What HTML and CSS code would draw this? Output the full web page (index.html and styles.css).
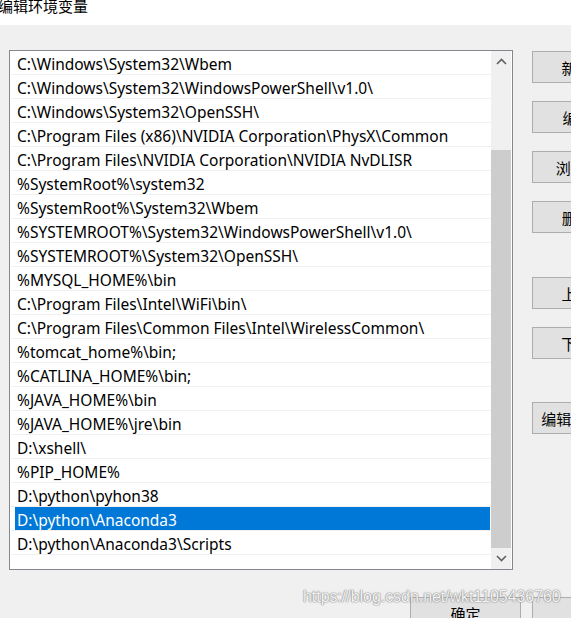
FILE: index.html
```html
<!DOCTYPE html>
<html>
<head>
<meta charset="utf-8">
<link rel="stylesheet" href="styles.css">
</head>
<body>
<div class="titlebar"><span class="title">编辑环境变量</span></div>
<div class="main">
  <div class="listbox">
    <div class="rows">
      <div class="row"><span>C:\Windows\System32\Wbem</span></div>
      <div class="row"><span>C:\Windows\System32\WindowsPowerShell\v1.0\</span></div>
      <div class="row"><span>C:\Windows\System32\OpenSSH\</span></div>
      <div class="row"><span>C:\Program Files (x86)\NVIDIA Corporation\PhysX\Common</span></div>
      <div class="row"><span>C:\Program Files\NVIDIA Corporation\NVIDIA NvDLISR</span></div>
      <div class="row"><span>%SystemRoot%\system32</span></div>
      <div class="row"><span>%SystemRoot%\System32\Wbem</span></div>
      <div class="row"><span>%SYSTEMROOT%\System32\WindowsPowerShell\v1.0\</span></div>
      <div class="row"><span>%SYSTEMROOT%\System32\OpenSSH\</span></div>
      <div class="row"><span>%MYSQL_HOME%\bin</span></div>
      <div class="row"><span>C:\Program Files\Intel\WiFi\bin\</span></div>
      <div class="row"><span>C:\Program Files\Common Files\Intel\WirelessCommon\</span></div>
      <div class="row"><span>%tomcat_home%\bin;</span></div>
      <div class="row"><span>%CATLINA_HOME%\bin;</span></div>
      <div class="row"><span>%JAVA_HOME%\bin</span></div>
      <div class="row"><span>%JAVA_HOME%\jre\bin</span></div>
      <div class="row"><span>D:\xshell\</span></div>
      <div class="row"><span>%PIP_HOME%</span></div>
      <div class="row"><span>D:\python\pyhon38</span></div>
      <div class="row selected"><span>D:\python\Anaconda3</span></div>
      <div class="row"><span>D:\python\Anaconda3\Scripts</span></div>
    </div>
    <div class="scrollbar">
      <div class="arrow">
        <svg width="11" height="7" viewBox="0 0 11 7"><path d="M1 6 L5.5 1.5 L10 6" fill="none" stroke="#606060" stroke-width="1.6"/></svg>
      </div>
      <div class="track"><div class="thumb"></div></div>
      <div class="arrow">
        <svg width="11" height="7" viewBox="0 0 11 7"><path d="M1 1 L5.5 5.5 L10 1" fill="none" stroke="#606060" stroke-width="1.6"/></svg>
      </div>
    </div>
  </div>
  <div class="side">
    <div class="btn">新建(N)</div>
    <div class="btn">编辑(E)</div>
    <div class="btn">浏览(B)...</div>
    <div class="btn">删除(D)</div>
    <div class="btn group">上移(U)</div>
    <div class="btn">下移(O)</div>
    <div class="btn group2">编辑文本(T)...</div>
  </div>
</div>
<div class="footer">
  <div class="btn">确定</div>
  <div class="btn">取消</div>
</div>
<div class="watermark">https://blog.csdn.net/wkt1105436760</div>
</body>
</html>
```

FILE: styles.css
```css
html, body {
  margin: 0;
  padding: 0;
}
body {
  width: 571px;
  height: 618px;
  overflow: hidden;
  background: #f0f0f0;
  font-family: "Noto Sans", "Noto Sans CJK SC", sans-serif;
  font-size: 15.5px;
  color: #000;
  position: relative;
}
.titlebar {
  height: 25px;
  background: #fff;
  overflow: hidden;
}
.title {
  display: block;
  margin-left: -2px;
  margin-top: -4px;
  font-family: "Noto Sans CJK SC", sans-serif;
  font-size: 15px;
  line-height: 20px;
}
.main {
  display: flex;
  align-items: flex-start;
  padding: 25px 0 0 9px;
}
.listbox {
  box-sizing: border-box;
  width: 504px;
  height: 520px;
  border: 1px solid #828790;
  background: #fff;
  display: flex;
  flex-shrink: 0;
}
.rows {
  flex: 1;
  overflow: hidden;
  padding-left: 1px;
}
.row {
  box-sizing: border-box;
  height: 24px;
  border-bottom: 1px solid #f0f0f0;
  padding-left: 4px;
  white-space: nowrap;
}
.row span {
  display: block;
  height: 23px;
  line-height: 27px;
  overflow: hidden;
  padding-left: 2px;
}
.row.selected span {
  background: #0078d7;
  color: #fff;
  margin-right: 1px;
}
.scrollbar {
  width: 20px;
  margin-right: 1px;
  background: #f0f0f0;
  display: flex;
  flex-direction: column;
}
.arrow {
  height: 21px;
  display: flex;
  align-items: center;
  justify-content: center;
}
.track {
  flex: 1;
  display: flex;
  flex-direction: column;
  justify-content: flex-end;
}
.thumb {
  height: 398px;
  background: #cdcdcd;
}
.side {
  margin-left: 19px;
  margin-top: 1px;
  display: flex;
  flex-direction: column;
  gap: 18px;
  flex-shrink: 0;
}
.btn {
  box-sizing: border-box;
  width: 110px;
  height: 32px;
  border: 1px solid #adadad;
  background: #e1e1e1;
  display: flex;
  align-items: center;
  justify-content: center;
  font-family: "Noto Sans CJK SC", sans-serif;
  font-size: 15px;
  white-space: nowrap;
  flex-shrink: 0;
}
.btn.group {
  margin-top: 26px;
}
.btn.group2 {
  margin-top: 25px;
}
.footer {
  display: flex;
  gap: 11px;
  padding-left: 410px;
  margin-top: 27px;
}
.footer .btn {
  width: 111px;
}
.watermark {
  position: absolute;
  left: 303px;
  top: 588px;
  font-family: "Liberation Sans", sans-serif;
  font-size: 15.9px;
  color: rgba(255, 255, 255, 0.92);
  text-shadow: 0 0 1px #8a8a8a, 0 0 1px #8a8a8a, 0 0 2px #aaaaaa;
  white-space: nowrap;
}
```
